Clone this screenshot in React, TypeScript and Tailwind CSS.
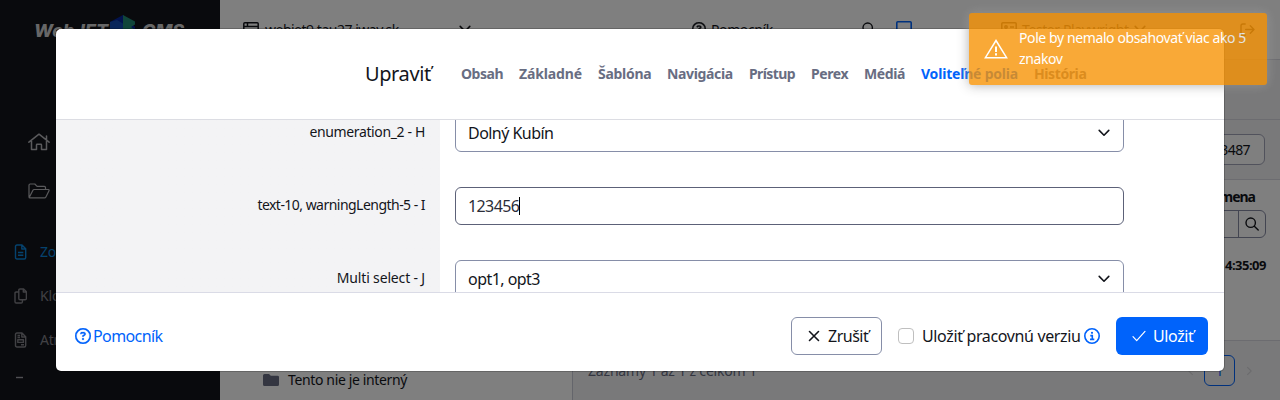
import type { ReactNode } from "react";
import { FaRegCircleQuestion } from "react-icons/fa6";

type SvgProps = { className?: string };

function Chevron({ className = "" }: SvgProps) {
  return (
    <svg viewBox="0 0 12 8" fill="none" stroke="currentColor" strokeWidth="1.6" strokeLinecap="round" strokeLinejoin="round" className={`shrink-0 ${className}`}>
      <path d="M1.2 1.4 6 6.2l4.8-4.8" />
    </svg>
  );
}

function HomeIcon() {
  return (
    <svg viewBox="0 0 22 18" fill="none" stroke="currentColor" strokeWidth="1.5" strokeLinecap="round" strokeLinejoin="round" className="h-[18px] w-[22px]">
      <path d="M.9 9.2 11 1.2l10.1 8M3.5 8v8.500h5V12q0-.7.7-.7h3.600q.7 0 .7.7v4.500h5V8M18.500 6.800V3" />
    </svg>
  );
}

function FolderIcon() {
  return (
    <svg viewBox="0 0 22 16" fill="none" stroke="currentColor" strokeWidth="1.200" strokeLinejoin="round" className="h-4 w-[22px]">
      <path d="M1 14V2.200C1 1.400 1.500 1 2.200 1h4.600l2.300 2.300h7.200c.8 0 1.200.5 1.200 1.200v2M1.200 14.500 4.800 7.400c.3-.6.7-.9 1.300-.9h14.200c.7 0 1 .6.7 1.200l-3.100 6.200c-.3.6-.7 1-1.400 1H2c-.6 0-1-.4-1-.9" />
    </svg>
  );
}

function FileIcon({ children }: { children: ReactNode }) {
  return (
    <svg viewBox="0 0 13 16" fill="none" stroke="currentColor" strokeWidth="1.4" strokeLinejoin="round" className="h-4 w-[13px] shrink-0">
      {children}
    </svg>
  );
}

function SearchIcon({ className = "" }: SvgProps) {
  return (
    <svg viewBox="0 0 14 14" fill="none" stroke="currentColor" strokeWidth="1.4" strokeLinecap="round" className={`shrink-0 ${className}`}>
      <circle cx="5.7" cy="5.7" r="4.7" />
      <path d="m9.300 9.300 3.900 3.700" />
    </svg>
  );
}

function Logo() {
  return (
    <div className="flex h-8 items-start text-[18px] font-extrabold italic leading-[22px] text-[#cfcfcf] [font-family:Inter,sans-serif]">
      <span className="w-[76px] pt-[5px]">WebJET</span>
      <svg viewBox="0 0 26 26" className="h-[26px] w-[26px] shrink-0">
        <path d="M13 0 0 7v11l13 8 12-8v-6z" fill="#05259b" />
        <path d="m0 7 7-2 18 11-12 8L0 15z" fill="#114bb4" />
        <path d="m13 0 12 6.500v3L21 12l3.500 2.500L18 18l-5-4z" fill="#218a74" />
      </svg>
      <span className="pl-[6px] pt-[5px]">CMS</span>
    </div>
  );
}

function Sidebar() {
  return (
    <aside className="flex h-[400px] w-[220px] shrink-0 flex-col overflow-hidden bg-[#13151b] text-[#b4b4b8]">
      <div className="flex h-[118px] pl-[34px] pt-[15px]">
        <Logo />
      </div>
      <div className="flex h-[96px] flex-col gap-[32px] pl-[28px] pt-[15px]">
        <HomeIcon />
        <FolderIcon />
      </div>
      <nav className="flex flex-col gap-7 pl-[14px] pt-[30px] text-[14px] leading-4 tracking-[-0.2px]">
        <div className="flex gap-[13px] text-[#0a84dc]">
          <FileIcon>
            <path d="M1.500 2.500q0-1.500 1.500-1.500h5l3.700 3.700V13.500q0 1.500-1.500 1.500H3q-1.500 0-1.500-1.500zM7.800 1v4h4M4 8.500h5.300M4 11.300h5.300" />
          </FileIcon>
          Zoznam
        </div>
        <div className="flex gap-[13px] text-[#828288]">
          <FileIcon>
            <path d="M4.800 2.200Q4.800 1 6 1h3.600L12.400 3.800v6.700q0 1.200-1.200 1.200H6q-1.200 0-1.200-1.200zM9.300 1v3h3M4.800 4H2.200Q1 4 1 5.200v8.600Q1 15 2.200 15h5Q8.400 15 8.400 13.800v-2" />
          </FileIcon>
          Klonovanie
        </div>
        <div className="flex gap-[13px] text-[#828288]">
          <FileIcon>
            <path d="M1.500 2.500q0-1.500 1.500-1.500h5l3.700 3.700V13.500q0 1.500-1.500 1.500H3q-1.500 0-1.500-1.500zM7.800 1v4h4M3.500 3.500h2.500M3.500 5.500h2.500M3.800 7.800h5.600v2.600H3.800zM7 12.800h3" />
          </FileIcon>
          Atribúty
        </div>
        <div className="flex text-[#a0a0a6]">
          <FileIcon>
            <path d="M2 1.500h7" />
          </FileIcon>
        </div>
      </nav>
    </aside>
  );
}

function TopBar() {
  return (
    <header className="flex h-[60px] items-center border-b border-[#d9d9e0] bg-white pb-px pl-[23px] text-[14px] tracking-[-0.4px]">
      <svg viewBox="0 0 16 14" fill="none" stroke="currentColor" strokeWidth="1.500" strokeLinejoin="round" className="h-[14px] w-4">
        <rect x=".8" y=".8" width="14.400" height="12.400" rx="1" />
        <path d="M1 4.500h14M4.500 1v3.500" />
      </svg>
      <span className="ml-[6px] w-[194px] tracking-[-0.5px]">webjet9.tau27.iway.sk</span>
      <Chevron className="h-2 w-3" />
      <FaRegCircleQuestion className="ml-[221px] h-[14px] w-[14px] shrink-0" stroke="currentColor" strokeWidth="12" />
      <span className="ml-[5px] w-[151px]">Pomocník</span>
      <SearchIcon className="h-[14px] w-[14px]" />
      <svg viewBox="0 0 16 16" fill="none" stroke="#0063fb" strokeWidth="1.600" className="ml-[20px] h-4 w-4">
        <rect x=".8" y=".8" width="14.400" height="14.400" rx="1" />
      </svg>
      <svg viewBox="0 0 16 14" fill="none" stroke="currentColor" strokeWidth="1.500" className="ml-[89px] h-[14px] w-4">
        <rect x=".8" y=".8" width="14.400" height="12.400" rx="1" />
        <circle cx="5" cy="5" r="1.200" />
        <path d="M3 10q2-3 4 0M9 5h4M9 8.500h4" />
      </svg>
      <span className="ml-[5px] w-[112px]">Tester Playwright</span>
      <Chevron className="h-2 w-3" />
      <svg viewBox="0 0 16 14" fill="none" stroke="currentColor" strokeWidth="1.500" strokeLinecap="round" strokeLinejoin="round" className="ml-[94px] h-[13px] w-[15px]">
        <path d="M5.500 1H3Q1 1 1 3v8q0 2 2 2h2.500M6 7h9M11 3l4 4-4 4" />
      </svg>
    </header>
  );
}

function Page() {
  return (
    <div className="flex h-[400px] w-[1280px]">
      <Sidebar />
      <div className="flex w-[1060px] flex-col bg-white">
        <TopBar />
        <div className="flex h-[340px]">
          <div className="flex w-[353px] shrink-0 items-end border-r border-[#c9cad6] pb-[10px] pl-[43px] text-[14px] leading-5 tracking-[-0.36px]">
            <svg viewBox="0 0 16 12" className="mb-1 mr-[9px] h-3 w-4" fill="#686d82">
              <path d="M1.500 0H6l1.800 1.700h6.700Q16 1.700 16 3v7.500q0 1.500-1.500 1.500h-13Q0 12 0 10.500v-9Q0 0 1.500 0z" />
            </svg>
            Tento nie je interný
          </div>
          <div className="flex grow flex-col text-[14px] tracking-[-0.18px]">
            <div className="h-[60px] border-b border-[#d9d9e0] bg-[#f3f3f5]" />
            <div className="flex h-[60px] justify-end border-b border-[#d9d9e0] bg-[#f3f3f5] pr-[15px] pt-[14px]">
              <div className="flex h-[31px] w-[120px] items-center justify-end rounded-md border border-[#a3a5b8] bg-white pr-[14px] tracking-[-0.6px]">63487</div>
            </div>
            <div className="flex h-[160px] flex-col items-end pr-[14px] font-bold">
              <div className="mt-[7px] pr-[11px] leading-5 tracking-[-1px]">Zmena</div>
              <div className="mt-[3px] flex h-[28px] w-[120px] justify-end rounded-md border border-[#868aa3]">
                <div className="flex w-[27px] items-center justify-center border-l border-[#868aa3]">
                  <SearchIcon className="h-[14px] w-[14px]" />
                </div>
              </div>
              <div className="mt-[17px] text-[13px] leading-5 tracking-[-0.5px]">14:35:09</div>
            </div>
            <div className="flex h-[60px] items-center border-t border-[#d9d9e0] bg-[#f3f3f5] pl-[15px]">
              <span className="w-[598px] pb-px text-[#686d82]">Záznamy 1 až 1 z celkom 1</span>
              <Chevron className="h-[6px] w-[9px] rotate-90 text-[#d8d8dc]" />
              <div className="ml-[9px] flex h-[31px] w-[31px] items-center justify-center rounded-md border border-[#0063fb] text-[#0063fb]">1</div>
              <Chevron className="ml-[10px] h-[6px] w-[9px] -rotate-90 text-[#d8d8dc]" />
            </div>
          </div>
        </div>
      </div>
    </div>
  );
}

function Row({ label, children }: { label: ReactNode; children: ReactNode }) {
  return (
    <div className="flex h-[73px] shrink-0">
      <div className="flex h-[35px] w-[384px] items-center justify-end pr-[15px] text-[14px]">{label}</div>
      <div className="w-[699px] px-[15px]">{children}</div>
    </div>
  );
}

function Select({ children }: { children: ReactNode }) {
  return (
    <div className="flex h-[38px] items-center justify-between rounded-md border border-[#868ea8] bg-white px-3 pr-[13px] text-[16px] tracking-[-0.54px]">
      {children}
      <Chevron className="h-2 w-3" />
    </div>
  );
}

function Modal() {
  return (
    <section className="absolute left-[56px] top-[29px] flex h-[342px] w-[1168px] flex-col overflow-hidden rounded-[5px] bg-white ring-1 ring-black/20">
      <div className="flex h-[91px] shrink-0 items-center border-b border-[#dcdde3] pb-[2px]">
        <h1 className="w-[405px] pl-[309px] pt-[2px] text-[20px] tracking-[-0.4px]">Upraviť</h1>
        <nav className="flex gap-4 whitespace-nowrap text-[14px] font-bold text-[#686d82]">
          <span className="w-[42px] tracking-[-0.48px]">Obsah</span>
          <span className="w-[63px] tracking-[-0.14px]">Základné</span>
          <span className="w-[53px] tracking-[-0.28px]">Šablóna</span>
          <span className="w-[66px] tracking-[-0.36px]">Navigácia</span>
          <span className="w-[46px] tracking-[-0.6px]">Prístup</span>
          <span className="w-[37px] tracking-[-0.4px]">Perex</span>
          <span className="w-[41px] tracking-[-0.4px]">Médiá</span>
          <span className="w-[97px] tracking-[-0.2px] text-[#0063fb]">Voliteľné polia</span>
          <span className="w-[52px] tracking-[-0.4px]">História</span>
        </nav>
      </div>
      <div className="flex h-[172px] shrink-0 flex-col overflow-hidden bg-linear-to-r from-[#f3f3f5] from-[384px] to-white to-[384px]">
        <div className="-mt-[6px] flex flex-col">
          <Row label={<span className="tracking-[-0.36px]">enumeration_2 - H</span>}>
            <Select>Dolný Kubín</Select>
          </Row>
          <Row label={<span className="tracking-[-0.53px]">text-10, warningLength-5 - I</span>}>
            <div className="flex h-[38px] items-center rounded-md border border-[#5c6178] bg-white pl-3 text-[16px] tracking-[-0.6px] text-[#2b2d38]">
              123456
              <span className="h-[18px] w-px bg-black" />
            </div>
          </Row>
          <Row label={<span className="tracking-[-0.16px]">Multi select - J</span>}>
            <Select>opt1, opt3</Select>
          </Row>
        </div>
      </div>
      <footer className="flex h-[79px] items-center border-t border-[#dadbe6] pl-[19px] pr-4 pt-[7px] text-[16px] leading-[38px]">
        <a className="flex grow items-center gap-[2px] tracking-[-0.6px] text-[#0063fb]">
          <FaRegCircleQuestion className="h-4 w-4" stroke="currentColor" strokeWidth="8" />
          Pomocník
        </a>
        <div className="flex items-center pt-px">
          <button className="-mt-px flex h-[38px] w-[91px] items-center rounded-md border border-[#868ea8] pl-4 tracking-[-0.5px]">
            <svg viewBox="0 0 12 12" fill="none" stroke="currentColor" strokeWidth="1.600" strokeLinecap="round" className="mr-2 h-3 w-3">
              <path d="m1.500 1.500 9 9m0-9-9 9" />
            </svg>
            Zrušiť
          </button>
          <span className="-mt-px ml-4 h-4 w-4 rounded-[4px] border border-[#bfbfbf]" />
          <span className="-mt-px ml-2 w-[162px] whitespace-nowrap tracking-[-0.36px]">Uložiť pracovnú verziu</span>
          <svg viewBox="0 0 16 16" fill="none" stroke="#0063fb" strokeWidth="1.600" className="-mt-px h-4 w-4">
            <circle cx="8" cy="8" r="7.200" />
            <path d="M6.300 7.600h2v3.700M6 11.400h4.300" />
            <circle cx="8" cy="4.800" r="1.100" fill="#0063fb" stroke="none" />
          </svg>
          <button className="-mt-px ml-4 flex h-[38px] w-[92px] items-center rounded-md bg-[#0063fb] pl-4 tracking-[-0.4px] text-white">
            <svg viewBox="0 0 14 12" fill="none" stroke="currentColor" strokeWidth="1.200" strokeLinecap="round" strokeLinejoin="round" className="mr-[7px] h-3 w-[14px]">
              <path d="m1 6.700 3.700 3.900L13 1.400" />
            </svg>
            Uložiť
          </button>
        </div>
      </footer>
    </section>
  );
}

function Toast() {
  return (
    <div className="absolute left-[969px] top-[13px] flex h-[72px] w-[298px] items-center rounded-[3px] bg-[#f89406] pb-[2px] pl-[15px] text-white opacity-80 shadow-[0_0_12px_#999]">
      <svg viewBox="0 0 24 20" fill="none" stroke="currentColor" strokeWidth="1.500" className="mr-[11px] mt-[2px] h-5 w-6 shrink-0">
        <path d="M12 1.500 22.600 18.700H1.400z" />
        <path d="M12 7.500v5.500M12 14.200v2.200" strokeWidth="2" />
      </svg>
      <p className="w-[240px] text-[14px] leading-[21px] tracking-[-0.4px]">
        Pole by nemalo obsahovať viac ako 5<br />
        znakov
      </p>
    </div>
  );
}

export default function App() {
  return (
    <div className="relative h-[400px] w-[1280px] overflow-hidden text-[#13151b] [font-family:'Noto_Sans','Open_Sans',sans-serif]">
      <Page />
      <div className="absolute inset-0 bg-black/50" />
      <Modal />
      <Toast />
    </div>
  );
}
